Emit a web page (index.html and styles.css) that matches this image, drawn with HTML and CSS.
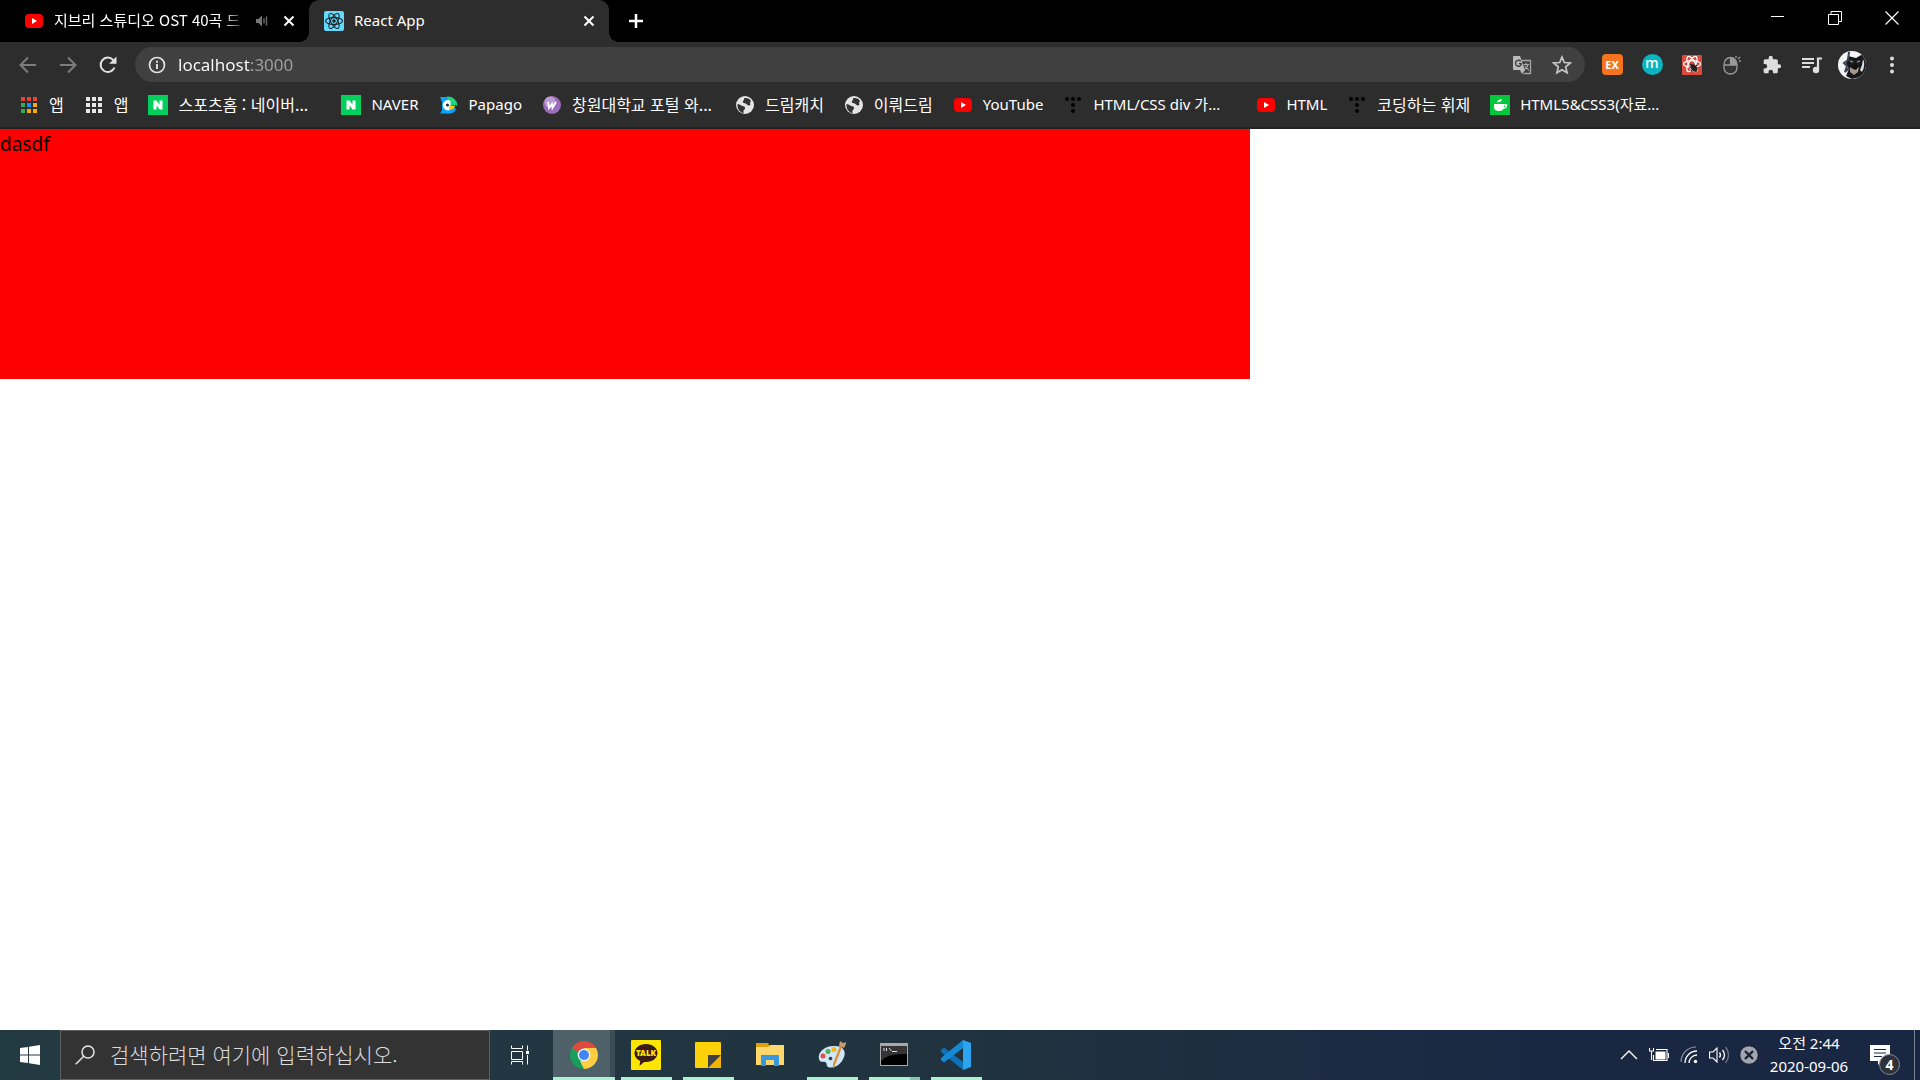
FILE: index.html
```html
<!DOCTYPE html>
<html lang="ko">
<head>
    <meta charset="UTF-8">
    <meta name="viewport" content="width=device-width, initial-scale=1.0">
    <link rel="stylesheet" href="styles.css">
    <title>React App</title>
</head>
<body>
    <!-- icons used more than once -->
    <svg class="defs" aria-hidden="true">
        <symbol id="youtube" viewBox="0 0 20 20">
            <rect x="1" y="3" width="18" height="14" rx="4" fill="#f00"/>
            <path d="M8 7l5 3-5 3z" fill="#fff"/>
        </symbol>
        <symbol id="close" viewBox="0 0 12 12">
            <path d="M1.5 1.5l9 9M10.500 1.500l-9 9" stroke="#fff" stroke-width="2" fill="none"/>
        </symbol>
        <symbol id="naver" viewBox="0 0 20 20">
            <rect width="20" height="20" fill="#03cf5d"/>
            <path d="M5.500 5.500h3l3 4.200V5.500h3v9h-3l-3-4.200v4.200h-3z" fill="#fff"/>
        </symbol>
        <symbol id="globe" viewBox="0 0 20 20">
            <circle cx="10" cy="10" r="9" fill="#e4e4e4"/>
            <path d="M2.500 9c2 0 3 1.500 5 2 1.500.300 3 .800 2.500 2.500-.300 1-1.500 1.200-1.500 2.500v2.200C5 17.500 2 14 2.500 9zM9 3.500c1.500-1 5.500-.500 7 2.500-1 1-1.200 2-.500 3.500-1.500 1.500-3 1-4-.500-.800-1-2.500-.500-3.500-1.500C7.200 6 9.500 5.500 9 3.500z" fill="#333"/>
        </symbol>
        <symbol id="dots" viewBox="0 0 20 20">
            <g fill="#000">
                <circle cx="4" cy="4" r="2"/><circle cx="10" cy="4" r="2"/><circle cx="16" cy="4" r="2"/>
                <circle cx="10" cy="10" r="2"/><circle cx="10" cy="16" r="2"/>
            </g>
        </symbol>
        <symbol id="atom" viewBox="0 0 20 20">
            <g fill="none" stroke="currentColor" stroke-width="1.100">
                <ellipse cx="10" cy="10" rx="8.500" ry="3.400"/>
                <ellipse cx="10" cy="10" rx="8.500" ry="3.400" transform="rotate(60 10 10)"/>
                <ellipse cx="10" cy="10" rx="8.500" ry="3.400" transform="rotate(120 10 10)"/>
            </g>
            <circle cx="10" cy="10" r="1.800" fill="currentColor"/>
        </symbol>
    </svg>

    <header class="browser">
        <div class="tabs">
            <div class="tab">
                <svg class="icon"><use href="#youtube"/></svg>
                <span class="title fade ko">지브리 스튜디오 OST 40곡 드</span>
                <svg class="sound" viewBox="0 0 14 14">
                    <path d="M1 5h2.500L7 1.500v11L3.500 9H1z" fill="#777"/>
                    <path d="M9 4.500v5M11.500 2.500v9" stroke="#666" stroke-width="1.500"/>
                </svg>
                <button class="close" aria-label="탭 닫기"><svg><use href="#close"/></svg></button>
            </div>
            <div class="tab active">
                <svg class="icon react"><use href="#atom"/></svg>
                <span class="title">React App</span>
                <button class="close" aria-label="탭 닫기"><svg><use href="#close"/></svg></button>
            </div>
            <button class="newtab" aria-label="새 탭">
                <svg viewBox="0 0 16 16"><path d="M8 1v14M1 8h14" stroke="#fff" stroke-width="2.500"/></svg>
            </button>
            <div class="window">
                <button aria-label="최소화"><svg viewBox="0 0 14 14"><path d="M0 5.500h13" stroke="#fff"/></svg></button>
                <button aria-label="이전 크기로"><svg viewBox="0 0 14 14"><path d="M.5 3.500h10v10H.500zM3 3.500v-3h10.500v10H11" fill="none" stroke="#fff"/></svg></button>
                <button aria-label="닫기"><svg viewBox="0 0 14 14"><path d="M.5 .5l13 13M13.500 .500l-13 13" stroke="#fff" stroke-width="1.200"/></svg></button>
            </div>
        </div>

        <div class="toolbar">
            <button class="tool" aria-label="뒤로"><svg viewBox="0 0 20 20"><path d="M18 10H3M10 2.500L2.500 10l7.500 7.500" fill="none" stroke="#7d7d7d" stroke-width="2"/></svg></button>
            <button class="tool" aria-label="앞으로"><svg viewBox="0 0 20 20"><path d="M2 10h15M10 2.500l7.500 7.500-7.500 7.500" fill="none" stroke="#7d7d7d" stroke-width="2"/></svg></button>
            <button class="tool" aria-label="새로고침"><svg viewBox="0 0 20 20"><path d="M16.500 12.500a7.200 7.200 0 1 1-1.400-7.600L17 6.800" fill="none" stroke="#e3e3e3" stroke-width="2"/><path d="M18.500 1.500v7.300h-7.300z" fill="#e3e3e3"/></svg></button>

            <div class="address">
                <svg class="info" viewBox="0 0 18 18"><circle cx="9" cy="9" r="7.500" fill="none" stroke="#e3e3e3" stroke-width="1.700"/><path d="M9 8v5M9 4.800v2" stroke="#e3e3e3" stroke-width="1.900"/></svg>
                <input type="text" class="url" value="localhost:3000" aria-label="주소창">
                <button class="tool" aria-label="번역">
                    <svg viewBox="0 0 20 20">
                        <path d="M8 5.500h10.500v13H11.500" fill="none" stroke="#a5a5a5" stroke-width="1.300"/>
                        <path d="M1 2q0-1 1-1h6l5 14H2q-1 0-1-1zM8 15h5l-3 4z" fill="#bbb"/>
                        <path d="M8.800 6.300a3 3 0 1 0 .7 2.300H6.800" fill="none" stroke="#404040" stroke-width="1.400"/>
                        <path d="M11.500 9.500H17M14 8v1.500M16 9.500q-1 4-4 5.500M13 11l4 4.500" fill="none" stroke="#b0b0b0" stroke-width="1.100"/>
                    </svg>
                </button>
                <button class="tool" aria-label="북마크에 추가"><svg viewBox="0 0 20 20"><path d="M10 2l2.300 5.500 6 .500-4.600 3.900 1.400 5.900L10 14.700l-5.100 3.100 1.400-5.900L1.700 8l6-.500z" fill="none" stroke="#c6c6c6" stroke-width="1.700"/></svg></button>
            </div>

            <button class="tool ex" aria-label="EX"><span>EX</span></button>
            <button class="tool em" aria-label="m"><span>m</span></button>
            <button class="tool bug" aria-label="React">
                <svg viewBox="0 0 20 20">
                    <rect width="20" height="20" rx="1" fill="#d94a3c"/>
                    <g fill="none" stroke="#fff" stroke-width="1.300"><ellipse cx="10" cy="9" rx="8.500" ry="3.400"/><ellipse cx="10" cy="9" rx="8.500" ry="3.400" transform="rotate(60 10 9)"/><ellipse cx="10" cy="9" rx="8.500" ry="3.400" transform="rotate(120 10 9)"/></g>
                    <ellipse cx="12" cy="13" rx="2.700" ry="4" transform="rotate(-35 12 13)" fill="#222"/>
                    <path d="M7 12l9 1M9 16l6-6M14 17v-5M8 9l3 2" stroke="#222" stroke-width="1.200"/>
                </svg>
            </button>
            <button class="tool" aria-label="마우스">
                <svg viewBox="0 0 20 20">
                    <path d="M8.500 2.500A6.500 7 0 0 0 2 9.500V13a6.500 6 0 0 0 13 0V9.500a6.500 7 0 0 0-6.500-7z" fill="#333" stroke="#999" stroke-width="1.300"/>
                    <path d="M8.500 2.500a6.500 7 0 0 1 6.500 7.500H8.500z" fill="#999"/>
                    <path d="M2 10h13M8.500 2.500V10" fill="none" stroke="#999" stroke-width="1.300"/>
                    <path d="M14 3V1M16 4l2-2M17 6h2" stroke="#999" stroke-width="1.300"/>
                </svg>
            </button>
            <button class="tool" aria-label="확장 프로그램"><svg viewBox="0 0 24 24"><path d="M20.500 11H19V7c0-1.100-.9-2-2-2h-4V3.500a2.500 2.500 0 0 0-5 0V5H4c-1.100 0-2 .9-2 2v3.800h1.500a2.700 2.700 0 0 1 0 5.400H2V20c0 1.100.9 2 2 2h3.800v-1.500a2.700 2.700 0 0 1 5.400 0V22H17c1.100 0 2-.9 2-2v-4h1.500a2.500 2.500 0 0 0 0-5z" fill="#dedede"/></svg></button>
            <button class="tool" aria-label="미디어 제어"><svg viewBox="0 0 20 20"><path d="M0 4h12M0 8h12M0 12h8" stroke="#dedede" stroke-width="2"/><path d="M16 15V3.500h4" fill="none" stroke="#dedede" stroke-width="2.200"/><circle cx="14" cy="15" r="3.200" fill="#dedede"/></svg></button>
            <button class="tool avatar" aria-label="프로필">
                <svg viewBox="0 0 28 28">
                    <circle cx="14" cy="14" r="14" fill="#f4f5f7"/>
                    <path d="M24 4.200A14 14 0 0 1 20 26.600L14 28l-6-3 3-7-3-5 2-8 4 1 4 1 5-3z" fill="#17181c"/>
                    <path d="M11 1l-1 8-4 3 3 3-2 6 4-4" fill="none" stroke="#3a4350" stroke-width="2"/>
                    <path d="M12 16q4 4 9 0l-1 5-4 3-4-3z" fill="#a5978a"/>
                    <path d="M14 15l3-2 3 3-2 3-3-1z" fill="#111"/>
                    <path d="M12 10l3 1M19 11l3-1" stroke="#8d8172" stroke-width="1.500"/>
                    <path d="M25 8q3 6-1 13l-2-2 2-5z" fill="#dcdfe4"/>
                </svg>
            </button>
            <button class="tool" aria-label="메뉴"><svg viewBox="0 0 20 20"><g fill="#dedede"><circle cx="10" cy="3.500" r="2"/><circle cx="10" cy="10" r="2"/><circle cx="10" cy="16.500" r="2"/></g></svg></button>
        </div>

        <nav class="bookmarks">
            <a href="#" class="ko">
                <svg class="icon" viewBox="0 0 20 20">
                    <path d="M2 2h4v4H2zM8 2h4v4H8zM14 2h4v4h-4z" fill="#ea4335"/>
                    <path d="M2 8h4v4H2zM2 14h4v4H2z" fill="#34a853"/>
                    <path d="M8 8h4v4H8z" fill="#1a8cff"/>
                    <path d="M14 8h4v4h-4zM14 14h4v4h-4zM8 14h4v4H8z" fill="#f9ab00"/>
                </svg>
                <span>앱</span>
            </a>
            <a href="#" class="ko">
                <svg class="icon" viewBox="0 0 20 20"><path d="M2 2h4v4H2zM8 2h4v4H8zM14 2h4v4h-4zM2 8h4v4H2zM8 8h4v4H8zM14 8h4v4h-4zM2 14h4v4H2zM8 14h4v4H8zM14 14h4v4h-4z" fill="#e8e8e8"/></svg>
                <span>앱</span>
            </a>
            <a href="#" class="ko long"><svg class="icon"><use href="#naver"/></svg><span>스포츠홈 : 네이버...</span></a>
            <a href="#"><svg class="icon"><use href="#naver"/></svg><span>NAVER</span></a>
            <a href="#">
                <svg class="icon" viewBox="0 0 20 20">
                    <path d="M1 2l9 0 3 8-3 8.500H1l2-3V7z" fill="#0aa5ff"/>
                    <path d="M8 18.500h2q6 0 7-5l-5-2z" fill="#0aa5ff"/>
                    <path d="M8 1.500a9.500 9.500 0 0 1 10.500 9H12L9 5z" fill="#1fd47c"/>
                    <path d="M11.500 6a5 5 0 1 0 0 8.500z" fill="#fff"/><circle cx="8.500" cy="10" r="1.500" fill="#10283c"/>
                    <path d="M10 11h6q-1 4-6 3.500z" fill="#ffc91e"/>
                </svg>
                <span>Papago</span>
            </a>
            <a href="#" class="ko long">
                <svg class="icon" viewBox="0 0 20 20">
                    <circle cx="10" cy="10" r="9" fill="#9b6cbc"/><circle cx="8" cy="7" r="5.500" fill="#bd9bd2"/>
                    <path d="M6 7l1 6 3-4 .500 4L14 7" fill="none" stroke="#fff" stroke-width="1.800"/>
                </svg>
                <span>창원대학교 포털 와...</span>
            </a>
            <a href="#" class="ko"><svg class="icon"><use href="#globe"/></svg><span>드림캐치</span></a>
            <a href="#" class="ko"><svg class="icon"><use href="#globe"/></svg><span>이뤄드림</span></a>
            <a href="#"><svg class="icon"><use href="#youtube"/></svg><span>YouTube</span></a>
            <a href="#" class="long"><svg class="icon"><use href="#dots"/></svg><span>HTML/CSS div 가...</span></a>
            <a href="#"><svg class="icon"><use href="#youtube"/></svg><span>HTML</span></a>
            <a href="#" class="ko"><svg class="icon"><use href="#dots"/></svg><span>코딩하는 휘제</span></a>
            <a href="#" class="long">
                <svg class="icon" viewBox="0 0 20 20">
                    <rect width="20" height="20" fill="#00c73c"/>
                    <path d="M4 9h10v3q0 4-5 4t-5-4z" fill="#fff"/><path d="M14 10h2.500q0 3-3 3" fill="none" stroke="#fff" stroke-width="1.400"/>
                    <path d="M7 7.500q0-3 5-3.500 0 3-5 3.500z" fill="#fff"/>
                </svg>
                <span>HTML5&amp;CSS3(자료...</span>
            </a>
        </nav>
    </header>

    <main>
        <div class="box">dasdf</div>
    </main>

    <footer class="taskbar">
        <button class="start" aria-label="시작"><svg viewBox="0 0 20 20"><path d="M0 3l8-1.100v7.600H0zM9 1.700L20 0v9.500H9zM0 10.500h8v7.600L0 17zM9 10.500h11V20L9 18.300z" fill="#fff"/></svg></button>
        <label class="search">
            <svg viewBox="0 0 20 20"><circle cx="13" cy="7" r="6" fill="none" stroke="#e6e6e6" stroke-width="1.500"/><path d="M8.700 11.300L.700 19.300" stroke="#e6e6e6" stroke-width="1.500"/></svg>
            <input type="text" placeholder="검색하려면 여기에 입력하십시오." aria-label="검색">
        </label>
        <button class="view" aria-label="작업 보기"><svg viewBox="0 0 20 20"><path d="M1.500 6.500h11v8h-11zM1.500 .5v3h11v-3M1.500 19.500v-3h11v3M17.500 .500v5M17.500 10v9.500" fill="none" stroke="#fff"/><path d="M16 6h3v3h-3z" fill="#fff"/></svg></button>

        <div class="apps">
            <button class="app current" aria-label="Chrome">
                <svg viewBox="0 0 28 28">
                    <path d="M14 14L1.900 7A14 14 0 0 1 26.100 7z" fill="#dd4b3e"/>
                    <path d="M14 14l12.100-7A14 14 0 0 1 14 28z" fill="#ffcd40"/>
                    <path d="M14 14v14A14 14 0 0 1 1.900 7z" fill="#17a05d"/>
                    <path d="M14 7h12.100L20 17z" fill="#ffcd40"/><path d="M2 7l6 10.500 6-3.500-2-7z" fill="#17a05d"/><path d="M20 17.500L14 28l-4-8z" fill="#ffcd40"/>
                    <path d="M1.900 7A14 14 0 0 1 26.100 7H14a7 7 0 0 0-6 4z" fill="#dd4b3e"/>
                    <circle cx="14" cy="14" r="6.400" fill="#f1f1f1"/><circle cx="14" cy="14" r="5" fill="#4285f4"/>
                </svg>
            </button>
            <button class="app running talk" aria-label="KakaoTalk"><span>TALK</span>
                <svg class="bubble" viewBox="0 0 30 30"><rect width="30" height="30" rx="1" fill="#fee500"/><path d="M15 4c6.500 0 11.500 4 11.500 9s-5 9-11.500 9l-2 0-4.500 4 .7-5C5.500 19.500 3.500 16.500 3.500 13c0-5 5-9 11.500-9z" fill="#391b1b"/></svg>
            </button>
            <button class="app running" aria-label="스티커 메모"><svg viewBox="0 0 28 28"><rect x="1" y="1" width="26" height="26" rx="1" fill="#fdd107"/><path d="M14 14h13v12q0 1-1 1H14z" fill="#f0b400"/><path d="M14 14h13L14 27z" fill="#3e4043"/></svg></button>
            <button class="app" aria-label="파일 탐색기"><svg viewBox="0 0 28 28"><path d="M0 2h11q2 0 2 2v3H0z" fill="#e0a010"/><path d="M0 6h12l2-2h14v20H0z" fill="#ffd86b"/><path d="M5 25V14h18v11h-5v-6h-8v6z" fill="#3a96dd"/></svg></button>
            <button class="app running" aria-label="그림판">
                <svg viewBox="0 0 28 28">
                    <path d="M1 18C-1 10 9 4 17 5c9 0 11 6 9 11-3 8-10 12-16 10-2-1-.5-4-3-5-2-.800-5 1-6-3z" fill="#cfe7f4"/>
                    <circle cx="5" cy="15" r="2.500" fill="#e94a4a"/><circle cx="10" cy="10.500" r="2.500" fill="#4caf50"/><circle cx="16" cy="8.500" r="2.500" fill="#f5b51b"/><circle cx="12.500" cy="17.500" r="1.800" fill="#26404d"/>
                    <path d="M24 6L17 24l-2 4 0-5 7-18z" fill="#e28a2e"/><path d="M21 5l1-5 3 2 4-1-3 6z" fill="#c79a68"/>
                </svg>
            </button>
            <button class="app running group" aria-label="명령 프롬프트"><svg viewBox="0 0 28 28"><rect y="2" width="28" height="23" fill="#a8a8a8"/><path d="M1 5h26v19H1z" fill="#000"/><path d="M1 5h26v8Q7 12 1 20z" fill="#353535"/><path d="M4 7v3M6.500 7v3M9 7l2.500 3M12 10.500h5" stroke="#ddd"/></svg></button>
            <button class="app running" aria-label="VS Code"><svg class="big" viewBox="0 0 30 30"><path d="M22 0l8 3v24l-8 3z" fill="#2ba5f0"/><path d="M0 10l3-2.500L22 22v8L0 12z" fill="#0b72b9"/><path d="M0 20l3 2.500L22 8V0L0 18z" fill="#1689d6"/></svg></button>
        </div>

        <div class="tray">
            <svg viewBox="0 0 20 20"><path d="M2 14l8-8 8 8" fill="none" stroke="#fff" stroke-width="1.400"/></svg>
            <svg viewBox="0 0 20 20"><path d="M6.500 6.500h10v8h-10z" fill="#fff"/><path d="M7 4.500h11v11H4.500V10M19.500 8v5M2.500 8v7M.500 3v3h4V3M2.500 6v4" fill="none" stroke="#fff" stroke-width="1.100"/></svg>
            <svg viewBox="0 0 20 20"><path d="M2 17A15 15 0 0 1 17 2" fill="none" stroke="#8d96a8" stroke-width="1.200"/><path d="M6 18A12 12 0 0 1 18 6M10 18a8 8 0 0 1 8-8" fill="none" stroke="#fff" stroke-width="1.300"/><circle cx="16.500" cy="16.500" r="1.700" fill="#fff"/></svg>
            <svg viewBox="0 0 20 20"><path d="M.5 7H4l4-4v14l-4-4H.500z" fill="none" stroke="#fff" stroke-width="1.100"/><path d="M10.500 7.500q2 2.500 0 5M13.500 5q4 5 0 10" fill="none" stroke="#fff" stroke-width="1.300"/><path d="M16.500 2q6 8 0 16" fill="none" stroke="#68738a" stroke-width="1.300"/></svg>
            <svg viewBox="0 0 20 20"><circle cx="10" cy="10" r="9.300" fill="#a0a5b0" stroke="#0d1626"/><path d="M6 6l8 8M14 6l-8 8" stroke="#18233a" stroke-width="2.400"/></svg>
        </div>
        <div class="clock">
            <span>오전 2:44</span>
            <span>2020-09-06</span>
        </div>
        <button class="notice" aria-label="알림">
            <svg viewBox="0 0 20 20"><path d="M0 0h20v16h-8l-4 4v-4H0z" fill="#fff"/><path d="M4 4.500h12M4 8h12M4 11.500h8" stroke="#1a2743" stroke-width="1.200"/></svg>
            <span class="badge">4</span>
        </button>
        <button class="desktop" aria-label="바탕 화면 보기"></button>
    </footer>
</body>
</html>
```
FILE: styles.css
```css
* {
    margin: 0;
    padding: 0;
    box-sizing: border-box;
}
body {
    min-height: 100vh;
    display: flex;
    flex-direction: column;
    background-color: #fff;
    font-family: "Noto Sans", "Noto Sans CJK KR", sans-serif;
    font-size: 15px;
}
button {
    display: flex;
    align-items: center;
    justify-content: center;
    border: none;
    background: none;
    color: #fff;
    font-family: inherit;
}
input {
    border: none;
    outline: none;
    background: none;
    font-family: inherit;
}
svg {
    flex-shrink: 0;
}
.defs {
    display: none;
}
.icon {
    width: 20px;
    height: 20px;
}
.ko {
    font-family: "Noto Sans CJK KR", "Noto Sans", sans-serif;
    font-size: 16px;
}

/* tabs */
.browser {
    background-color: #2d2d2d;
    border-bottom: 2px solid #202020;
    color: #fff;
}
.tabs {
    display: flex;
    height: 42px;
    padding-left: 9px;
    background-color: #000;
}
.tab {
    position: relative;
    display: flex;
    align-items: center;
    width: 300px;
    padding: 0 14px 0 15px;
}
.tab .title {
    flex: 1;
    margin-left: 10px;
    padding-bottom: 2px;
    white-space: nowrap;
    line-height: 24px;
}
.tab .fade {
    font-size: 15px;
    -webkit-mask-image: linear-gradient(to right, #000 88%, transparent);
    mask-image: linear-gradient(to right, #000 88%, transparent);
}
.tab.active {
    background-color: #2d2d2d;
    border-radius: 10px 10px 0 0;
}
.tab.active::before, .tab.active::after {
    content: "";
    position: absolute;
    bottom: 0;
    width: 10px;
    height: 10px;
}
.tab.active::before {
    right: 100%;
    background: radial-gradient(circle at 0 0, #000 10px, #2d2d2d 10px);
}
.tab.active::after {
    left: 100%;
    background: radial-gradient(circle at 100% 0, #000 10px, #2d2d2d 10px);
}
.react {
    border-radius: 2px;
    background-color: #61dafb;
    color: #20232a;
}
.sound {
    width: 14px;
    height: 14px;
    margin: 0 14px 0 8px;
}
.close svg {
    width: 12px;
    height: 12px;
}
.newtab {
    width: 54px;
}
.newtab svg {
    width: 16px;
    height: 16px;
}
.window {
    display: flex;
    height: 36px;
    margin-left: auto;
}
.window button {
    width: 57px;
}
.window svg {
    width: 14px;
    height: 14px;
}

/* toolbar */
.toolbar {
    display: flex;
    align-items: center;
    padding: 5px 8px 0;
}
.tool {
    width: 40px;
    height: 35px;
    flex-shrink: 0;
}
.tool svg {
    width: 20px;
    height: 20px;
}
.address {
    flex: 1;
    display: flex;
    align-items: center;
    height: 35px;
    margin: 0 7px;
    padding: 0 3px 0 13px;
    border-radius: 18px;
    background-color: #404040;
}
.info {
    width: 18px;
    height: 18px;
}
.url {
    flex: 1;
    margin-left: 12px;
    font-size: 17px;
    line-height: 24px;
    color: transparent;
    background: linear-gradient(to right, #fff 72px, #a0a0a0 72px);
    -webkit-background-clip: text;
    background-clip: text;
}
.ex span, .em span {
    width: 21px;
    height: 21px;
    font-weight: bold;
    text-align: center;
}
.ex span {
    border-radius: 4px;
    background-color: #f47421;
    font-size: 11px;
    line-height: 21px;
}
.em span {
    border-radius: 50%;
    background-color: #0cb4c0;
    font-size: 14px;
    font-weight: 500;
    line-height: 18px;
}
.avatar svg {
    width: 28px;
    height: 28px;
}

/* bookmarks */
.bookmarks {
    display: flex;
    align-items: center;
    gap: 20px;
    height: 45px;
    padding-left: 19px;
}
.bookmarks a {
    display: flex;
    align-items: center;
    gap: 10px;
    color: #fff;
    text-decoration: none;
    white-space: nowrap;
    line-height: 24px;
}
.bookmarks span {
    padding-bottom: 2px;
}
.bookmarks .long span {
    width: 143px;
}

/* page */
main {
    flex: 1;
}
.box {
    width: 1250px;
    max-width: 100%;
    height: 250px;
    background-color: red;
    color: #000;
    font-size: 19px;
    line-height: 30px;
}

/* taskbar */
.taskbar {
    display: flex;
    height: 50px;
    background: linear-gradient(to right, #223a42, #20333f 50%, #1a2743 80%, #1a2743);
    color: #fff;
}
.start {
    width: 60px;
}
.start svg, .view svg {
    width: 20px;
    height: 20px;
}
.search {
    display: flex;
    align-items: center;
    width: 430px;
    padding-left: 14px;
    border: 1px solid #5f5f5f;
    background-color: #333;
}
.search svg {
    width: 20px;
    height: 20px;
}
.search input {
    flex: 1;
    margin-left: 15px;
    padding-bottom: 2px;
    font-family: "Noto Sans CJK KR", sans-serif;
    font-size: 21px;
    font-weight: 300;
    color: #fff;
}
.search input::placeholder {
    color: #dcdcdc;
}
.view {
    width: 63px;
    padding-right: 3px;
}
.apps {
    display: flex;
}
.app {
    position: relative;
    width: 62px;
}
.app svg {
    width: 28px;
    height: 28px;
}
.app .big, .app .bubble {
    width: 30px;
    height: 30px;
}
.app.running::after {
    content: "";
    position: absolute;
    left: 6px;
    right: 5px;
    bottom: 0;
    height: 3px;
    background-color: #a9f1d1;
}
.app.group::after {
    background: linear-gradient(to right, #a9f1d1 41px, #87c4ae 41px);
}
.app.current {
    border-bottom: 3px solid #a9f1d1;
    padding-top: 3px;
    background: linear-gradient(to right, #4e6168 57px, #3b4c54 57px);
}
.talk span {
    position: absolute;
    z-index: 1;
    color: #fee500;
    font-size: 8px;
    font-weight: 900;
    line-height: 12px;
    top: 17px;
}
.tray {
    display: flex;
    align-items: center;
    gap: 10px;
    margin-left: auto;
}
.tray svg {
    width: 20px;
    height: 20px;
}
.clock {
    display: flex;
    flex-direction: column;
    align-items: center;
    justify-content: center;
    width: 100px;
    font-size: 15px;
    line-height: 23px;
}
.notice {
    position: relative;
    width: 55px;
    padding-right: 14px;
}
.notice svg {
    width: 20px;
    height: 20px;
}
.badge {
    position: absolute;
    left: 20px;
    bottom: 5px;
    width: 21px;
    height: 21px;
    border: 1px solid #858b93;
    border-radius: 50%;
    background-color: #2e3238;
    font-size: 14px;
    font-weight: bold;
    line-height: 19px;
    text-align: center;
}
.desktop {
    width: 6px;
    border-left: 1px solid #7a8294;
}
```
